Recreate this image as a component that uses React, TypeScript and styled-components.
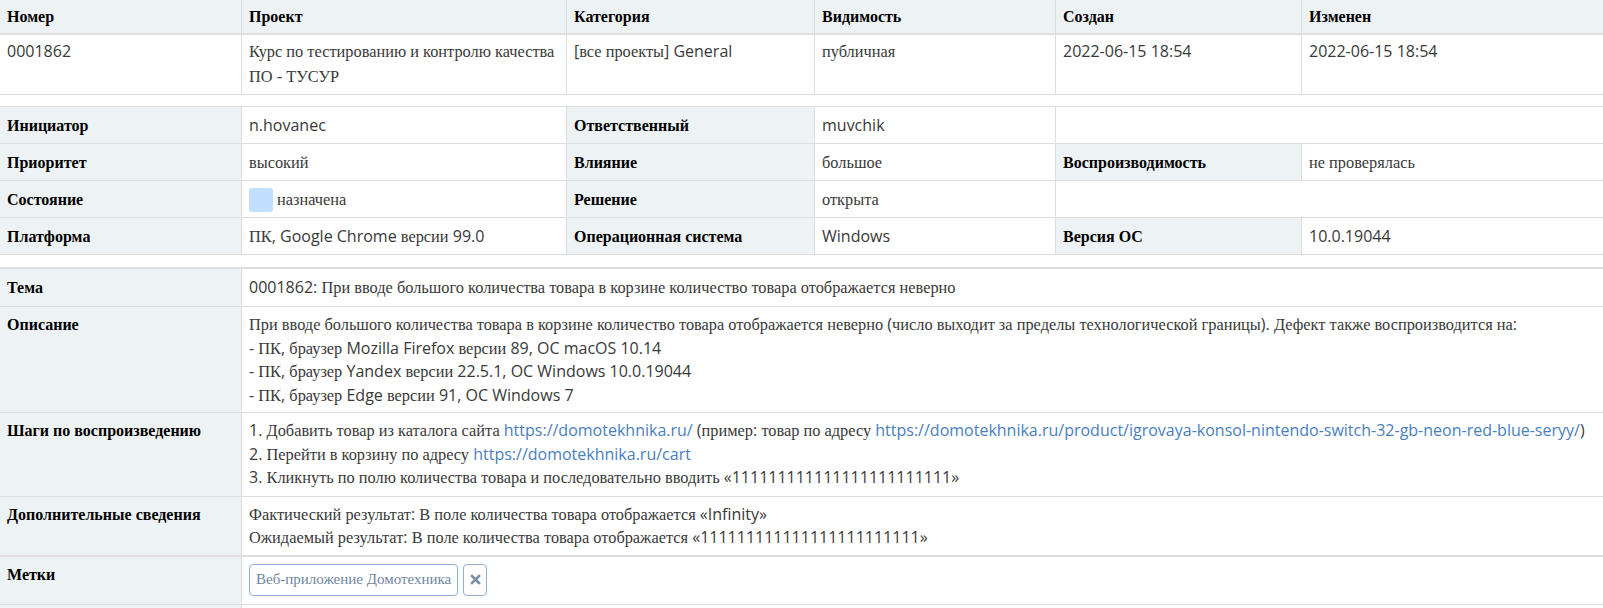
import React from "react";
import styled, { createGlobalStyle } from "styled-components";

const GlobalStyle = createGlobalStyle`
  html, body { margin: 0; padding: 0; background: #ffffff; }
  body {
    font-family: "Open Sans", sans-serif;
    font-size: 16px;
    line-height: 23px;
    color: #393939;
  }
`;

const SERIF = `"Liberation Serif", "Times New Roman", serif`;

const Cy = styled.span`
  font-family: ${SERIF};
  font-size: var(--cy-size, 16.35px);
`;

function T({ children }: { children: string }) {
  const parts = children.split(/([\u0400-\u04FF]+(?:[\s\-]+[\u0400-\u04FF]+)*)/);
  return (
    <>
      {parts.map((p, i) => (i % 2 === 1 ? <Cy key={i}>{p}</Cy> : p))}
    </>
  );
}

const COLS = "242px 325px 248px 241px 246px 1fr";
const ONES = "111111111111111111111111";

const Page = styled.div`
  display: flex;
  flex-direction: column;
  width: 1603px;
`;

const Table = styled.div<{ $cols: string; $topWidth?: number; $mt?: number }>`
  display: grid;
  grid-template-columns: ${(p) => p.$cols};
  border-top: ${(p) => p.$topWidth ?? 0}px solid #dddddd;
  margin-top: ${(p) => p.$mt ?? 0}px;
`;

const Cell = styled.div<{
  $head?: boolean;
  $label?: boolean;
  $span?: number;
  $last?: boolean;
  $pad?: string;
  $bottom?: number;
}>`
  grid-column: span ${(p) => p.$span ?? 1};
  padding: ${(p) => p.$pad ?? "7px 7px 6px"};
  background: ${(p) => (p.$head || p.$label ? "#edf3f4" : "#ffffff")};
  border-right: ${(p) => (p.$last ? "none" : "1px solid #dddddd")};
  border-bottom: ${(p) => p.$bottom ?? 1}px solid #dddddd;
  color: ${(p) => (p.$head || p.$label ? "#000000" : "#393939")};
  font-weight: ${(p) => (p.$head || p.$label ? 700 : 400)};
  --cy-size: ${(p) => (p.$head || p.$label ? "16px" : "16.35px")};
  min-width: 0;
`;

const ValueLine = styled.div`
  display: flex;
  align-items: center;
  gap: 4px;
`;

const StatusBox = styled.span`
  display: inline-block;
  width: 24px;
  height: 24px;
  margin: -1px 0;
  border-radius: 3px;
  background: #c2dfff;
`;

const Lines = styled.div<{ $lh?: number }>`
  display: flex;
  flex-direction: column;
  line-height: ${(p) => p.$lh ?? 22}px;
`;

const Link = styled.a`
  color: #4a80c0;
  text-decoration: none;
`;

const Tags = styled.div`
  display: flex;
  gap: 5px;
  align-items: center;
`;

const TagButton = styled.a`
  --cy-size: 15px;
  display: inline-flex;
  align-items: center;
  height: 32px;
  box-sizing: border-box;
  padding: 0 6px;
  border: 1px solid #8fb0d0;
  border-radius: 4px;
  color: #6f86a0;
  font-family: ${SERIF};
  font-size: 15px;
  text-decoration: none;
  background: #ffffff;
`;

const DetachButton = styled.button`
  display: inline-flex;
  align-items: center;
  justify-content: center;
  width: 24px;
  height: 32px;
  box-sizing: border-box;
  padding: 0;
  border: 1px solid #8fb0d0;
  border-radius: 4px;
  background: #ffffff;
  color: #6f86a0;
`;

const headers = ["Номер", "Проект", "Категория", "Видимость", "Создан", "Изменен"];
const ROW1_PAD = "4px 7px 5px";

export default function App() {
  return (
    <>
      <GlobalStyle />
      <Page>
        <Table $cols={COLS}>
          {headers.map((h, i) => (
            <Cell key={h} $head $last={i === 5} $bottom={2} $pad="5px 7px">
              <Lines>
                <span><T>{h}</T></span>
              </Lines>
            </Cell>
          ))}
          <Cell $pad={ROW1_PAD}>
            <Lines $lh={24}>0001862</Lines>
          </Cell>
          <Cell $pad={ROW1_PAD}>
            <Lines $lh={24}>
              <span><T>Курс по тестированию и контролю качества</T></span>
              <span><T>ПО - ТУСУР</T></span>
            </Lines>
          </Cell>
          <Cell $pad={ROW1_PAD}>
            <Lines $lh={24}>
              <span><T>[все проекты] General</T></span>
            </Lines>
          </Cell>
          <Cell $pad={ROW1_PAD}>
            <Lines $lh={24}>
              <span><T>публичная</T></span>
            </Lines>
          </Cell>
          <Cell $pad={ROW1_PAD}>
            <Lines $lh={24}>2022-06-15 18:54</Lines>
          </Cell>
          <Cell $pad={ROW1_PAD} $last>
            <Lines $lh={24}>2022-06-15 18:54</Lines>
          </Cell>
        </Table>

        <Table $cols={COLS} $topWidth={1} $mt={11}>
          <Cell $label><T>Инициатор</T></Cell>
          <Cell>n.hovanec</Cell>
          <Cell $label><T>Ответственный</T></Cell>
          <Cell>muvchik</Cell>
          <Cell $span={2} $last />

          <Cell $label><T>Приоритет</T></Cell>
          <Cell><T>высокий</T></Cell>
          <Cell $label><T>Влияние</T></Cell>
          <Cell><T>большое</T></Cell>
          <Cell $label><T>Воспроизводимость</T></Cell>
          <Cell $last><T>не проверялась</T></Cell>

          <Cell $label><T>Состояние</T></Cell>
          <Cell>
            <ValueLine>
              <StatusBox />
              <T>назначена</T>
            </ValueLine>
          </Cell>
          <Cell $label><T>Решение</T></Cell>
          <Cell><T>открыта</T></Cell>
          <Cell $span={2} $last />

          <Cell $label><T>Платформа</T></Cell>
          <Cell><T>ПК, Google Chrome версии 99.0</T></Cell>
          <Cell $label><T>Операционная система</T></Cell>
          <Cell>Windows</Cell>
          <Cell $label><T>Версия ОС</T></Cell>
          <Cell $last>10.0.19044</Cell>
        </Table>

        <Table $cols="242px 1fr" $topWidth={2} $mt={12}>
          <Cell $label $pad="7px 7px"><T>Тема</T></Cell>
          <Cell $last $pad="7px 7px">
            <T>0001862: При вводе большого количества товара в корзине количество товара отображается неверно</T>
          </Cell>

          <Cell $label $pad="6px 7px 5px"><T>Описание</T></Cell>
          <Cell $last $pad="6px 7px 5px">
            <Lines $lh={22.5}>
              <span>
                <T>При вводе большого количества товара в корзине количество товара отображается неверно (число выходит за пределы технологической границы). Дефект также воспроизводится на:</T>
              </span>
              <span><T>- ПК, браузер Mozilla Firefox версии 89, OC macOS 10.14</T></span>
              <span><T>- ПК, браузер Yandex версии 22.5.1, OC Windows 10.0.19044</T></span>
              <span><T>- ПК, браузер Edge версии 91, OC Windows 7</T></span>
            </Lines>
          </Cell>

          <Cell $label $pad="6px 7px"><T>Шаги по воспроизведению</T></Cell>
          <Cell $last $pad="6px 7px">
            <Lines $lh={23.5}>
              <span>
                <T>1. Добавить товар из каталога сайта </T>
                <Link href="#">https://domotekhnika.ru/</Link>
                <T> (пример: товар по адресу </T>
                <Link href="#">https://domotekhnika.ru/product/igrovaya-konsol-nintendo-switch-32-gb-neon-red-blue-seryy/</Link>)
              </span>
              <span>
                <T>2. Перейти в корзину по адресу </T>
                <Link href="#">https://domotekhnika.ru/cart</Link>
              </span>
              <span><T>{`3. Кликнуть по полю количества товара и последовательно вводить «${ONES}»`}</T></span>
            </Lines>
          </Cell>

          <Cell $label $bottom={2} $pad="6px 7px"><T>Дополнительные сведения</T></Cell>
          <Cell $last $bottom={2} $pad="6px 7px">
            <Lines>
              <span><T>Фактический результат: В поле количества товара отображается «Infinity»</T></span>
              <span><T>{`Ожидаемый результат: В поле количества товара отображается «${ONES}»`}</T></span>
            </Lines>
          </Cell>

          <Cell $label $pad="6px 7px 8px"><T>Метки</T></Cell>
          <Cell $last $pad="7px 7px 8px">
            <Tags>
              <TagButton href="#"><T>Веб-приложение Домотехника</T></TagButton>
              <DetachButton aria-label="Открепить">
                <svg width="11" height="11" viewBox="0 0 11 11">
                  <path d="M2 2 L9 9 M9 2 L2 9" stroke="#7a8ea6" strokeWidth="2.6" strokeLinecap="square" />
                </svg>
              </DetachButton>
            </Tags>
          </Cell>

          <Cell $label />
          <Cell $last />
        </Table>
      </Page>
    </>
  );
}
